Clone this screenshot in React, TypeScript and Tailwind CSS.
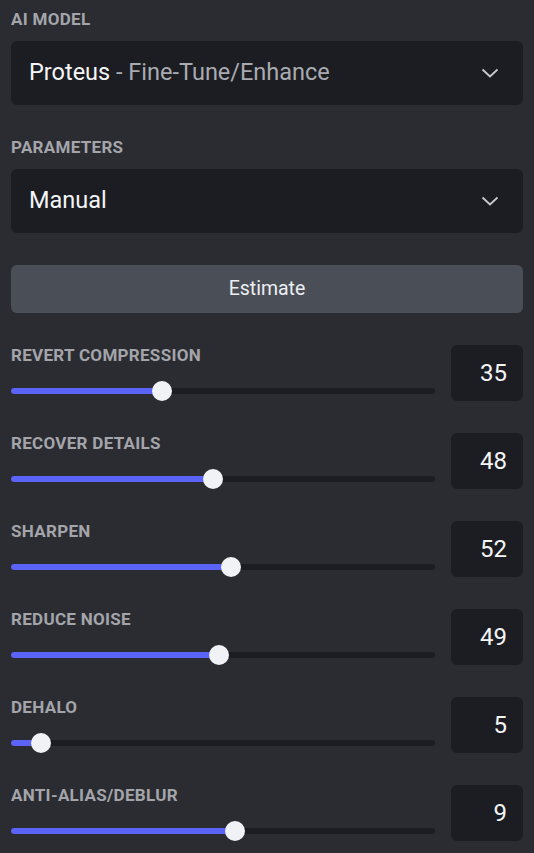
import React from 'react';

const font = { fontFamily: 'Roboto, "Liberation Sans", sans-serif' };

const Chevron = () => (
  <svg width="18" height="10" viewBox="0 0 18 10" fill="none" className="shrink-0">
    <polyline points="1.5,1.5 9,8.5 16.5,1.5" stroke="#c9cacf" strokeWidth="1.8" />
  </svg>
);

const Label = ({ children }: { children: React.ReactNode }) => (
  <div className="h-5 text-[17px] leading-5 font-bold text-[#a3a5ab] tracking-[0.3px]">{children}</div>
);

const Select = ({ children }: { children: React.ReactNode }) => (
  <div className="h-16 rounded-md bg-[#1c1d22] flex items-center justify-between pl-[18px] pr-[24px]">
    <div className="text-[23.5px] text-[#f4f5f7]">{children}</div>
    <Chevron />
  </div>
);

const params = [
  { name: 'REVERT COMPRESSION', value: 35, pct: 35 },
  { name: 'RECOVER DETAILS', value: 48, pct: 47.5 },
  { name: 'SHARPEN', value: 52, pct: 52 },
  { name: 'REDUCE NOISE', value: 49, pct: 49 },
  { name: 'DEHALO', value: 5, pct: 5 },
  { name: 'ANTI-ALIAS/DEBLUR', value: 9, pct: 53 },
];

const SliderRow = ({ name, value, pct }: { name: string; value: number; pct: number }) => (
  <div className="flex gap-4 h-14">
    <div className="flex-1">
      <Label>{name}</Label>
      {/* track area: thumb travels between 10px insets */}
      <div className="relative mt-4 h-5 flex items-center">
        <div className="w-full h-1.5 rounded-full bg-[#1c1d22]" />
        <div className="absolute left-0 right-0 top-0 h-5 px-[10px]">
          <div className="relative h-full">
            <div
              className="absolute -left-[10px] top-[7px] h-1.5 rounded-full bg-[#5b64f6]"
              style={{ width: `calc(${pct}% + 10px)` }}
            />
            <div
              className="absolute top-0 w-5 h-5 -ml-[10px] rounded-full bg-[#f1f2f6]"
              style={{ left: `${pct}%` }}
            />
          </div>
        </div>
      </div>
    </div>
    <div className="w-[72px] h-14 rounded-md bg-[#1c1d22] flex items-center justify-end pr-4 text-[24px] text-[#f4f5f7]">
      {value}
    </div>
  </div>
);

export default function App() {
  return (
    <div className="min-h-screen bg-[#2b2c31] px-[11px] pt-[9px] pb-8" style={font}>
      <Label>AI MODEL</Label>
      <div className="mt-3">
        <Select>
          Proteus <span className="text-[#a9abb1]">- Fine-Tune/Enhance</span>
        </Select>
      </div>

      <div className="mt-8">
        <Label>PARAMETERS</Label>
      </div>
      <div className="mt-3">
        <Select>Manual</Select>
      </div>

      <button className="mt-8 w-full h-12 rounded-md bg-[#4a4e57] text-[19.5px] text-[#eceef2]">
        Estimate
      </button>

      <div className="mt-8 flex flex-col gap-8">
        {params.map((p) => (
          <SliderRow key={p.name} {...p} />
        ))}
      </div>
    </div>
  );
}
